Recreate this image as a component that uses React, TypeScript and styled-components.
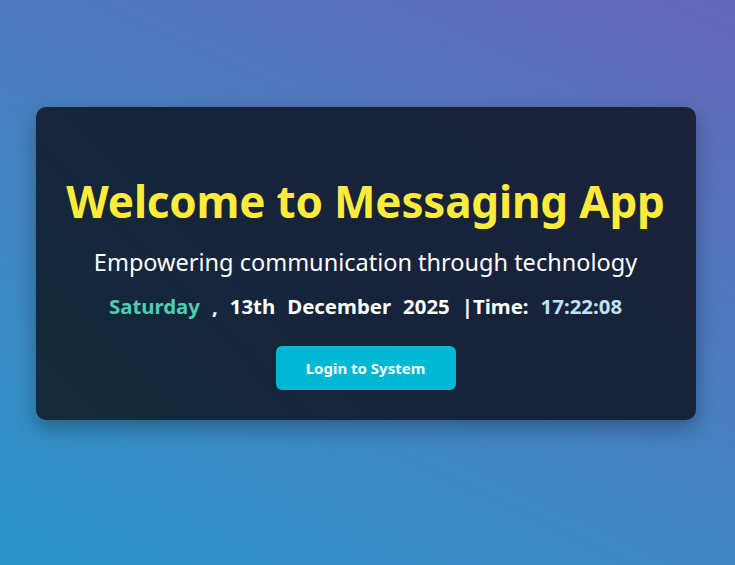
import React from "react";
import styled, { createGlobalStyle } from "styled-components";

const GlobalStyle = createGlobalStyle`
  html, body {
    margin: 0;
    padding: 0;
  }
  body {
    font-family: "Noto Sans", "Open Sans", sans-serif;
  }
`;

const Page = styled.div`
  min-height: 100vh;
  box-sizing: border-box;
  padding: 107px 4px 0 0;
  display: flex;
  justify-content: center;
  align-items: flex-start;
  background: linear-gradient(25deg, #2a95c8 0%, #4680c0 50%, #6567b8 100%);
`;

const Card = styled.div`
  width: 660px;
  height: 313px;
  box-sizing: border-box;
  border-radius: 10px;
  background: linear-gradient(45deg, #142a3b 0%, #16233a 50%, #1b2239 100%);
  box-shadow: 0 8px 20px rgba(0, 0, 0, 0.3);
  display: flex;
  flex-direction: column;
  align-items: center;
  justify-content: center;
  padding-top: 38px;
`;

const Title = styled.h1`
  margin: 0;
  font-size: 44px;
  font-weight: 700;
  color: #ffeb3b;
  line-height: 1.2;
  letter-spacing: -0.2px;
`;

const Subtitle = styled.p`
  margin: 21px 0 0;
  font-size: 23.5px;
  color: #ffffff;
  line-height: 1.2;
`;

const DateLine = styled.div`
  margin-top: 16px;
  display: flex;
  align-items: baseline;
  gap: 12px;
  font-size: 20.4px;
  font-weight: 700;
  color: #ffffff;
`;

const Part = styled.span<{ $tone?: "day" | "time" }>`
  color: ${(p) =>
    p.$tone === "day" ? "#4fcdb0" : p.$tone === "time" ? "#bee3f8" : "#ffffff"};
`;

const LoginButton = styled.button`
  margin-top: 26px;
  width: 180px;
  height: 44px;
  border: none;
  border-radius: 6px;
  background: #00b8d4;
  color: #ffffff;
  font-family: inherit;
  font-size: 15px;
  font-weight: 700;
  cursor: pointer;
`;

const App = () => {
  return (
    <Page>
      <GlobalStyle />
      <Card>
        <Title>Welcome to Messaging App</Title>
        <Subtitle>Empowering communication through technology</Subtitle>
        <DateLine>
          <Part $tone="day">Saturday</Part>
          <Part>,</Part>
          <Part>13th</Part>
          <Part>December</Part>
          <Part>2025</Part>
          <Part>|Time:</Part>
          <Part $tone="time">17:22:08</Part>
        </DateLine>
        <LoginButton>Login to System</LoginButton>
      </Card>
    </Page>
  );
};

export default App;
